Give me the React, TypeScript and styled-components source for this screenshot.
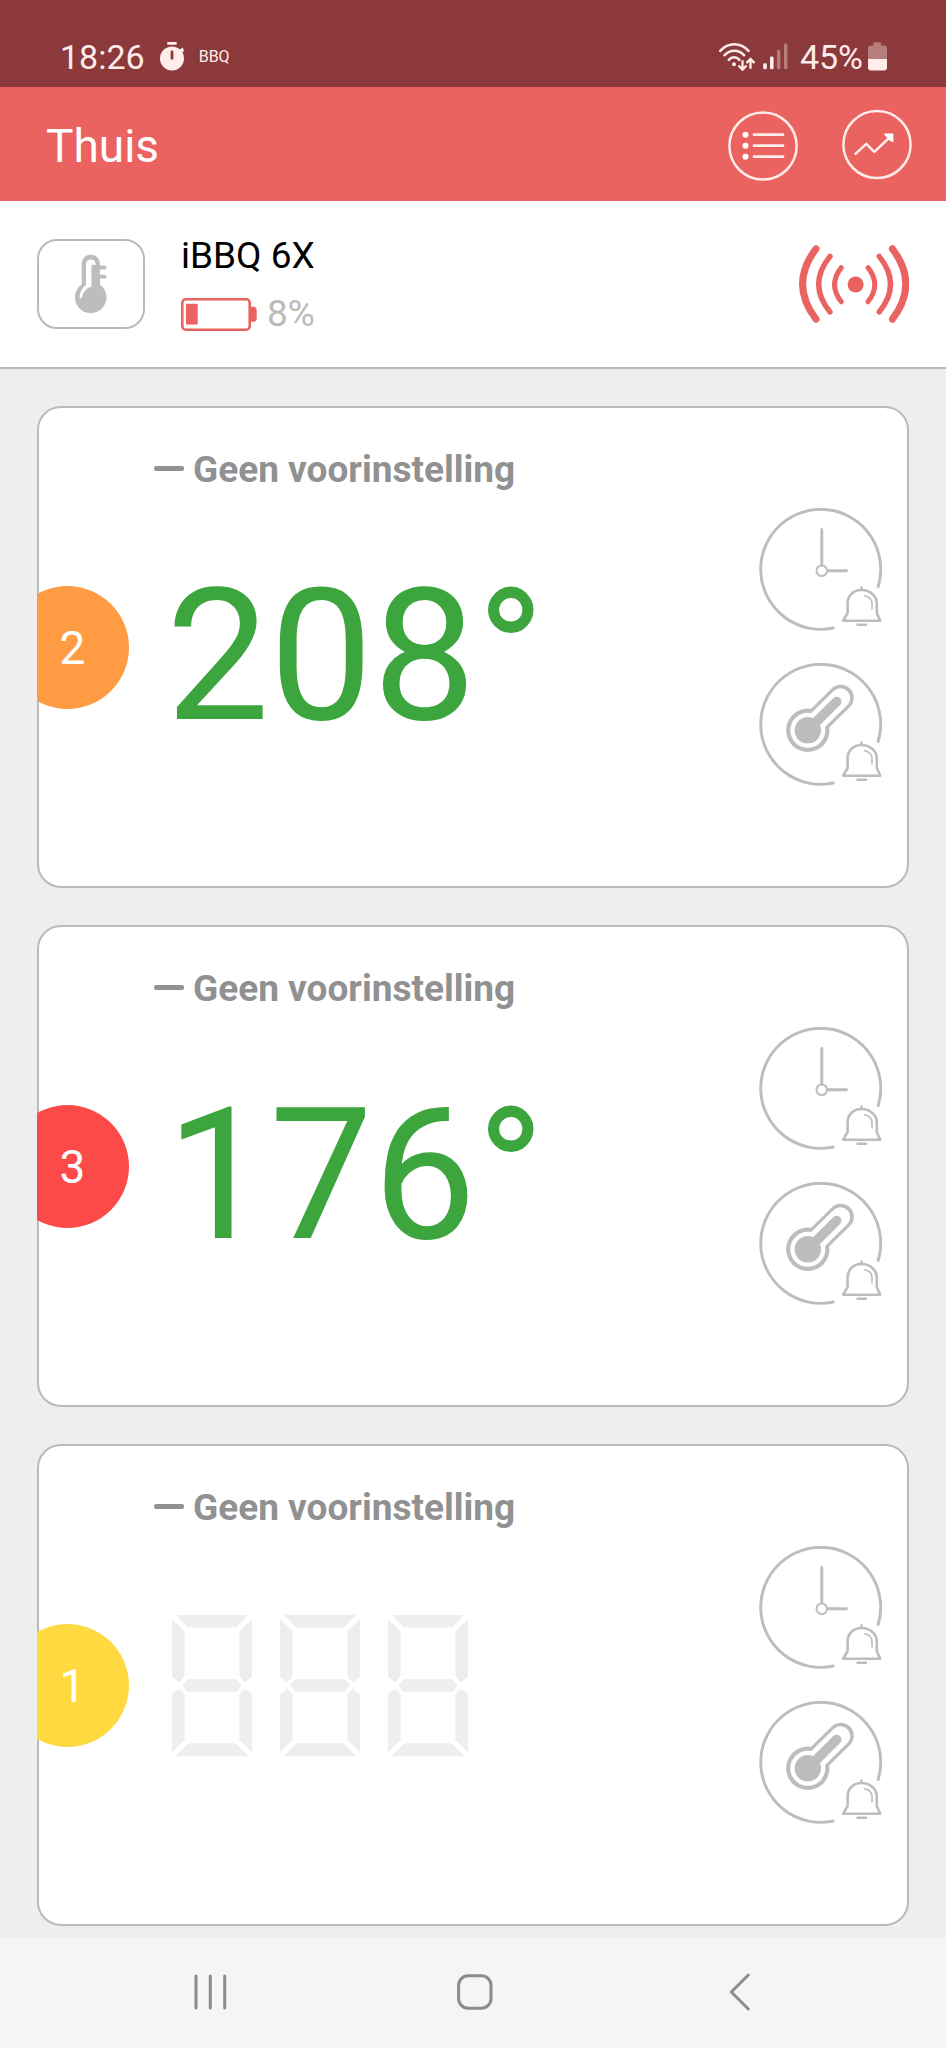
import React from "react";
import styled, { createGlobalStyle } from "styled-components";

const color = {
  status: "#8b393a",
  brand: "#ea6360",
  line: "#bababa",
  icon: "#bdbdbd",
  page: "#eeeeee",
  navBar: "#f5f5f5",
  preset: "#919191",
  value: "#3ca53d",
  onBrand: "#ffeceb",
};

const GlobalStyle = createGlobalStyle`
  *, *::before, *::after { box-sizing: border-box; }
  body {
    margin: 0;
    background: ${color.page};
    font-family: Roboto, "Liberation Sans", sans-serif;
  }
  h1, h2, h3, p { margin: 0; font-weight: 400; }
  svg { display: block; flex: none; }
`;

const Screen = styled.div`
  display: flex;
  flex-direction: column;
  min-height: 100vh;
`;

const StatusBar = styled.div`
  display: flex;
  align-items: center;
  justify-content: space-between;
  height: 87px;
  padding: 26px 59px 0 60px;
  background: ${color.status};
  color: ${color.onBrand};
  font-size: 34px;
  line-height: 40px;
`;

const StatusGroup = styled.div<{ $gap: number }>`
  display: flex;
  align-items: center;
  gap: ${(p) => p.$gap}px;
`;

const StatusPercent = styled.div`
  display: flex;
  align-items: center;
  gap: 5px;
  padding-left: 4px;
`;

const StatusNote = styled.span`
  font-size: 16px;
  line-height: 20px;
`;

const AppBar = styled.header`
  display: flex;
  align-items: center;
  justify-content: space-between;
  height: 114px;
  padding: 0 34px 0 46px;
  background: ${color.brand};
`;

const Title = styled.h1`
  padding-top: 4px;
  color: #fff;
  font-size: 46px;
  line-height: 56px;
`;

const Actions = styled.div`
  display: flex;
  gap: 44px;
`;

const IconButton = styled.button`
  display: block;
  padding: 0;
  border: 0;
  background: none;
  color: inherit;
  cursor: pointer;
`;

const DeviceBar = styled.section`
  display: flex;
  align-items: center;
  height: 168px;
  padding: 0 37px;
  border-bottom: 2px solid ${color.line};
  background: #fff;
`;

const DeviceThumb = styled.button`
  display: flex;
  align-items: center;
  justify-content: center;
  width: 108px;
  height: 90px;
  padding: 0;
  border: 2px solid ${color.line};
  border-radius: 20px;
  background: #fff;
`;

const DeviceInfo = styled.div`
  display: flex;
  flex: 1;
  flex-direction: column;
  gap: 16px;
  padding: 2px 0 0 36px;
`;

const DeviceName = styled.h2`
  color: #000;
  font-size: 37px;
  line-height: 42px;
`;

const DeviceCharge = styled.div`
  display: flex;
  align-items: center;
  gap: 10px;
  color: #bbbbbb;
  font-size: 37px;
  line-height: 42px;
`;

const Probes = styled.main`
  display: flex;
  flex: 1;
  flex-direction: column;
  gap: 37px;
  padding: 37px 37px 11px;
`;

const Card = styled.article`
  display: grid;
  grid-template-columns: 92px 1fr 123px;
  align-items: center;
  height: 482px;
  padding-right: 25px;
  border: 2px solid ${color.line};
  border-radius: 24px;
  background: #fff;
`;

const BadgeSlot = styled.div`
  width: 92px;
  margin-left: -2px;
  overflow: hidden;
`;

const Badge = styled.div<{ $tone: string }>`
  display: flex;
  align-items: center;
  justify-content: center;
  width: 123px;
  height: 123px;
  margin-left: -31px;
  padding: 2px 0 0 10px;
  border-radius: 50%;
  background: ${(p) => p.$tone};
  color: #fff;
  font-size: 46px;
  line-height: 56px;
`;

const Reading = styled.div`
  display: flex;
  flex-direction: column;
  align-self: stretch;
  padding: 40px 0 80px;
`;

const Preset = styled.h3`
  display: flex;
  align-items: flex-start;
  gap: 9px;
  padding-left: 23px;
  color: ${color.preset};
  font-size: 37px;
  font-weight: 700;
  line-height: 44px;
`;

const PresetDash = styled.span`
  width: 30px;
  height: 5px;
  margin-top: 18px;
  border-radius: 2px;
  background: currentColor;
`;

const ReadingBody = styled.div`
  display: flex;
  flex: 1;
  align-items: center;
`;

const Temperature = styled.p`
  padding: 14px 0 0 35px;
  color: ${color.value};
  font-size: 184px;
  line-height: 216px;
`;

const EmptyDigits = styled.div`
  display: flex;
  gap: 28px;
  padding: 0 0 4px 41px;
`;

const Alarms = styled.div`
  display: flex;
  flex-direction: column;
  gap: 32px;
`;

const NavBar = styled.nav`
  display: flex;
  align-items: center;
  justify-content: center;
  height: 111px;
  padding: 0 0 2px 4px;
  background: ${color.navBar};
`;

const NavButton = styled.button`
  display: flex;
  justify-content: center;
  width: 28%;
  padding: 0;
  border: 0;
  background: none;
  color: #8c8c8c;
`;

const TimerIcon = () => (
  <svg width="24" height="29" viewBox="0 0 24 29" fill="currentColor" aria-hidden="true">
    <rect x="7.3" width="9.4" height="2.8" rx="0.6" />
    <circle cx="12" cy="16.6" r="12" />
    <path d="M19 8l3.6-2.6 1.4 3-2 3z" />
    <path d="M12 10v6.3" stroke={color.status} strokeWidth="2.8" strokeLinecap="round" />
  </svg>
);

const WifiIcon = () => (
  <svg width="36" height="28" viewBox="0 0 36 28" fill="none" stroke="currentColor" strokeWidth="2.6" strokeLinecap="round" aria-hidden="true">
    <path d="M1.3 7.9C9.4-.9 21.4-.9 29.5 7.9M5.6 12.2c5.6-6 13.9-6 19.4 0M9.8 16.8c3-3.5 7.5-3.5 10.6 0" />
    <circle cx="15" cy="21.2" r="2" fill="currentColor" stroke="none" />
    <path strokeWidth="2.3" d="M23.5 18.2v8.2M20.2 23.2l3.3 3.5 3.3-3.5M31.5 25v-8.600M28.2 19.4l3.3-3.5 3.3 3.5" />
  </svg>
);

const SignalIcon = () => (
  <svg width="25" height="27" viewBox="0 0 25 27" fill="currentColor" aria-hidden="true">
    <rect x="0.2" y="20.3" width="3.6" height="6" rx="1.4" />
    <rect x="7" y="13.5" width="3.6" height="12.8" rx="1.4" />
    <rect x="14" y="6.8" width="3.4" height="19.5" rx="1.4" opacity="0.38" />
    <rect x="21" y="0.5" width="3.4" height="25.8" rx="1.4" opacity="0.38" />
  </svg>
);

const PhoneBatteryIcon = () => (
  <svg width="19" height="29" viewBox="0 0 19 29" fill="currentColor" aria-hidden="true">
    <path opacity="0.38" d="M5.3 3.6V1.4Q5.3.2 6.5.2h5.4q1.2 0 1.2 1.2v2.2H16q3 0 3 3V17H0V6.6q0-3 3-3z" />
    <path d="M0 17h19v8.5q0 3-3 3H3q-3 0-3-3z" />
  </svg>
);

const ListIcon = () => (
  <svg width="70" height="74" viewBox="0 0 70 74" fill="none" stroke={color.onBrand} aria-hidden="true">
    <circle cx="35" cy="39" r="33.6" strokeWidth="2.5" />
    <path d="M26 27.7h29M26 38.7h29M26 49.7h29" strokeWidth="2.8" strokeLinecap="round" />
    <g fill="#fff" stroke="none">
      <circle cx="17.5" cy="27.7" r="3" />
      <circle cx="17.5" cy="38.7" r="3" />
      <circle cx="17.5" cy="49.7" r="3" />
    </g>
  </svg>
);

const TrendIcon = () => (
  <svg width="70" height="74" viewBox="0 0 70 74" fill="none" stroke={color.onBrand} aria-hidden="true">
    <circle cx="35" cy="37.5" r="33.6" strokeWidth="2.5" />
    <path d="M13.5 46.8l10.8-10 8 8L46.5 31.5" strokeWidth="2.5" strokeLinecap="round" strokeLinejoin="round" />
    <path d="M42 26.6h9.4v8.4l-2.4-.6-5.8-5.4z" fill="#fff" stroke="none" />
  </svg>
);

const ThermometerIcon = () => (
  <svg width="32" height="60" viewBox="0 0 32 60" aria-hidden="true">
    <g fill={color.icon}>
      <circle cx="15.7" cy="43.3" r="15.8" />
      <path d="M6.7 34V9.5a9.1 9.1 0 0 1 18.2 0V34z" />
    </g>
    <path d="M24 13.5h5.6M24 22.7h5.6" stroke={color.icon} strokeWidth="3.8" strokeLinecap="round" />
    <path
      d="M11 11C11 3.8 20.8 3.8 20.8 10.8H16.4V32.5C11 34.5 7.5 38.5 6.9 43.5C6.2 45 4.6 45 4.7 43C5 37.5 8 33 11 31Z"
      fill="#fff"
    />
  </svg>
);

const BatteryIcon = () => (
  <svg width="76" height="33" viewBox="0 0 76 33" aria-hidden="true">
    <rect x="1.3" y="1.3" width="67.4" height="30.4" rx="3.5" fill="none" stroke={color.brand} strokeWidth="2.6" />
    <path d="M5 5.8h11.7v20.7H5zM69 8.7h4.5q2.2 1 2.200 3v9q0 2-2.200 3H69z" fill={color.brand} />
  </svg>
);

const BroadcastIcon = () => (
  <svg width="110" height="78" viewBox="0 0 110 78" fill="none" stroke={color.brand} strokeLinecap="round" aria-hidden="true">
    <circle cx="56.6" cy="39.5" r="8" fill={color.brand} stroke="none" />
    <path strokeWidth="7" d="M17 3.8Q-9.8 39 17 74.2M93.4 3.800Q120.200 39 93.400 74.200" />
    <path strokeWidth="5.4" d="M31 11.4Q8.400 39.200 31 67M80.200 11.400Q102.800 39.200 80.200 67" />
    <path strokeWidth="5" d="M42.3 22.6Q28.800 39.500 42.300 56.800M69 22.600Q82.500 39.500 69 56.800" />
  </svg>
);

/* Open ring with the bell in its lower right corner; children fill the dial. */
const AlarmDial = ({ children }: { children: React.ReactNode }) => (
  <svg width="123" height="123" viewBox="0 0 123 123" fill="none" stroke={color.icon} strokeWidth="2.9" strokeLinecap="round" strokeLinejoin="round" aria-hidden="true">
    <path d="M119.2 78.5A60 60 0 1 0 74.2 120" />
    {children}
    <path strokeWidth="2.6" d="M102.5 79.5v2M88.6 105V95.5C88.6 87.5 94.5 82 102.5 82S117.8 87.5 117.8 95.5V105L121.2 112.7H84.2Z" />
    <path strokeWidth="2.4" d="M98.5 116.8h8.6" />
    <path strokeWidth="1.6" d="M105.4 87.7q7.6 1.2 7.6 8.3v5" />
  </svg>
);

const TimeDial = () => (
  <AlarmDial>
    <path d="M62.8 21.5v35.5M68.5 62.8h19" />
    <circle cx="62.8" cy="62.8" r="5.3" strokeWidth="2" />
  </AlarmDial>
);

const TemperatureDial = () => (
  <AlarmDial>
    <circle cx="48.8" cy="67.3" r="21.7" fill={color.icon} stroke="none" />
    <path d="M48.8 67.3L81.8 34.7" strokeWidth="26" />
    <circle cx="48.8" cy="67.3" r="17.5" fill="#fff" stroke="none" />
    <path d="M48.8 67.3L81.5 35" stroke="#fff" strokeWidth="19.5" />
    <circle cx="48.8" cy="67.3" r="13.2" fill={color.icon} stroke="none" />
    <path d="M48.8 67.3L77.6 38.6" strokeWidth="9.8" />
  </AlarmDial>
);

const EmptyDigit = () => (
  <svg width="80" height="141" viewBox="0 0 80 141" fill={color.page} aria-hidden="true">
    <path d="M4 0h72L63.5 12.8h-47zM4 141h72L63.5 128.2h-47z" />
    <path d="M0 4l12.5 12v45.5L7 67.5l-7-6zM80 4L67.5 16v45.5l5.5 6 7-6z" />
    <path d="M0 137l12.5-12V79.5L7 73.5l-7 6zM80 137l-12.5-12V79.5l5.5-6 7 6z" />
    <path d="M10 70.5l5.5-6.3h49l5.500 6.300-5.500 6.300h-49z" />
  </svg>
);

const RecentsIcon = () => (
  <svg width="36" height="38" viewBox="0 0 36 38" fill="none" stroke="currentColor" strokeWidth="3" strokeLinecap="round" aria-hidden="true">
    <path d="M3 3v32M17.3 3v32M31.7 3v32" />
  </svg>
);

const HomeIcon = () => (
  <svg width="36" height="38" viewBox="0 0 36 38" fill="none" stroke="currentColor" strokeWidth="3" aria-hidden="true">
    <rect x="1.6" y="2.8" width="32.4" height="32.4" rx="9.500" />
  </svg>
);

const BackIcon = () => (
  <svg width="22" height="38" viewBox="0 0 22 38" fill="none" stroke="currentColor" strokeWidth="3" strokeLinecap="round" strokeLinejoin="round" aria-hidden="true">
    <path d="M20.3 2L3.3 19l17 17" />
  </svg>
);

interface Probe {
  channel: number;
  tone: string;
  value: string | null;
}

const probes: Probe[] = [
  { channel: 2, tone: "#ff9b42", value: "208°" },
  { channel: 3, tone: "#fb4a47", value: "176°" },
  { channel: 1, tone: "#ffd940", value: null },
];

const ProbeCard = ({ channel, tone, value }: Probe) => (
  <Card>
    <BadgeSlot>
      <Badge $tone={tone}>{channel}</Badge>
    </BadgeSlot>
    <Reading>
      <Preset>
        <PresetDash />
        Geen voorinstelling
      </Preset>
      <ReadingBody>
        {value ? (
          <Temperature>{value}</Temperature>
        ) : (
          <EmptyDigits>
            <EmptyDigit />
            <EmptyDigit />
            <EmptyDigit />
          </EmptyDigits>
        )}
      </ReadingBody>
    </Reading>
    <Alarms>
      <IconButton type="button" aria-label="Tijdalarm">
        <TimeDial />
      </IconButton>
      <IconButton type="button" aria-label="Temperatuuralarm">
        <TemperatureDial />
      </IconButton>
    </Alarms>
  </Card>
);

export default function App() {
  return (
    <Screen>
      <GlobalStyle />
      <StatusBar>
        <StatusGroup $gap={15}>
          <span>18:26</span>
          <TimerIcon />
          <StatusNote>BBQ</StatusNote>
        </StatusGroup>
        <StatusGroup $gap={8}>
          <WifiIcon />
          <SignalIcon />
          <StatusPercent>
            <span>45%</span>
            <PhoneBatteryIcon />
          </StatusPercent>
        </StatusGroup>
      </StatusBar>
      <AppBar>
        <Title>Thuis</Title>
        <Actions>
          <IconButton type="button" aria-label="Lijst">
            <ListIcon />
          </IconButton>
          <IconButton type="button" aria-label="Grafiek">
            <TrendIcon />
          </IconButton>
        </Actions>
      </AppBar>
      <DeviceBar>
        <DeviceThumb type="button" aria-label="Apparaat">
          <ThermometerIcon />
        </DeviceThumb>
        <DeviceInfo>
          <DeviceName>iBBQ 6X</DeviceName>
          <DeviceCharge>
            <BatteryIcon />
            <span>8%</span>
          </DeviceCharge>
        </DeviceInfo>
        <BroadcastIcon />
      </DeviceBar>
      <Probes>
        {probes.map((probe) => (
          <ProbeCard key={probe.channel} {...probe} />
        ))}
      </Probes>
      <NavBar>
        <NavButton type="button" aria-label="Recente apps">
          <RecentsIcon />
        </NavButton>
        <NavButton type="button" aria-label="Startscherm">
          <HomeIcon />
        </NavButton>
        <NavButton type="button" aria-label="Terug">
          <BackIcon />
        </NavButton>
      </NavBar>
    </Screen>
  );
}
